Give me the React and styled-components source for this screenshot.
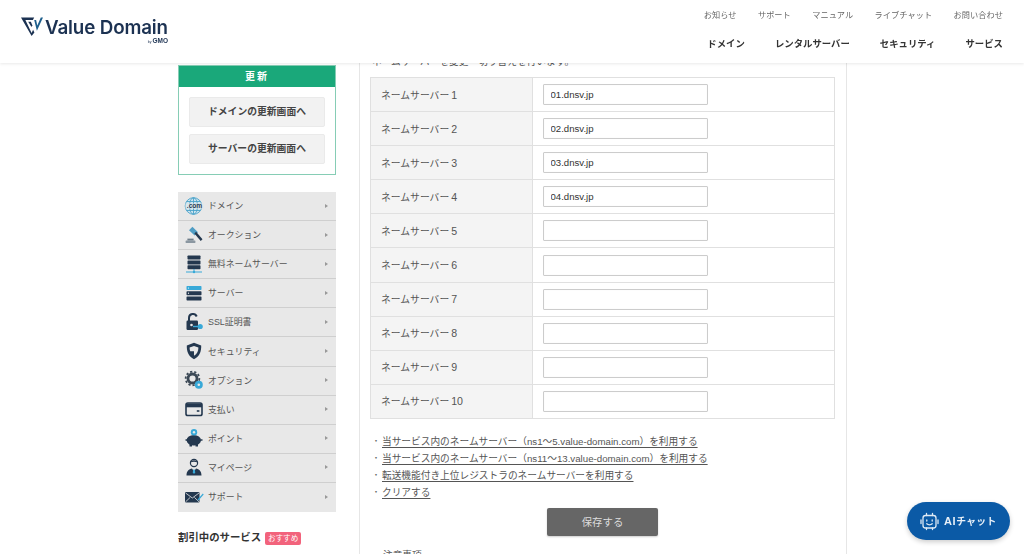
import React from "react";
import styled, { createGlobalStyle } from "styled-components";

const Global = createGlobalStyle`
  html, body { margin: 0; padding: 0; height: 554px; overflow: hidden; background: #fff; }
  body { font-family: "Liberation Sans", "Noto Sans CJK JP", sans-serif; color: #444; }
  * { box-sizing: border-box; }
`;

const Header = styled.header`
  position: fixed; top: 0; left: 0; right: 0; height: 63px; z-index: 5;
  background: #fff; box-shadow: 0 1px 3px rgba(0,0,0,.09);
  display: flex; justify-content: space-between;
  padding: 0 21px;
`;
const LogoWrap = styled.a`
  display: flex; align-items: flex-start; padding-top: 17px; gap: 2px; position: relative; width: 150px;
`;
const LogoText = styled.span`
  font-family: Inter, "Liberation Sans", sans-serif; font-weight: 600; font-size: 18.8px; line-height: 22px;
  color: #1c3252; letter-spacing: -.15px; white-space: nowrap;
`;
const ByGmo = styled.span`
  position: absolute; right: 3px; top: 37px; font-family: "Liberation Sans", sans-serif;
  font-size: 6.5px; line-height: 7px; font-weight: 700; color: #1c3252; white-space: nowrap;
  small { font-size: 3.5px; font-weight: 400; margin-right: 1px; }
`;
const NavCol = styled.nav`
  display: flex; flex-direction: column; align-items: flex-end; padding-top: 10px;
`;
const TopNav = styled.div`
  display: flex; gap: 21.4px; font-size: 8.2px; line-height: 11px; color: #666; letter-spacing: .05px; white-space: nowrap;
`;
const MainNav = styled.div`
  display: flex; gap: 30px; margin-top: 16px; font-size: 9.4px; line-height: 13px; font-weight: 700; color: #333; white-space: nowrap;
`;

const Page = styled.div`
  display: flex; width: 669px; margin-left: 178px; padding-top: 55px; gap: 23px; height: 554px; overflow: hidden;
`;
const Sidebar = styled.aside`
  width: 158px; flex: none; padding-top: 10px;
`;
const RenewBox = styled.section`
  border: 1px solid #86cdb5; height: 110px; margin-bottom: 17px;
`;
const RenewHead = styled.h3`
  margin: 0; height: 21px; background: #1aa87a; color: #fff; text-align: center;
  font-size: 10px; line-height: 22px; font-weight: 700; letter-spacing: 2px;
`;
const RenewBody = styled.div`
  padding: 10px 10px 0; display: flex; flex-direction: column; gap: 7px;
`;
const RenewButton = styled.a`
  display: block; height: 30px; background: #f2f2f2; border: 1px solid #eaeaea; border-radius: 2px;
  text-align: center; font-size: 9.8px; line-height: 28px; font-weight: 700; color: #444;
`;
const Menu = styled.ul`
  list-style: none; margin: 0; padding: 0; background: #e8e8e8;
`;
const MenuItem = styled.li`
  height: 29.1px; display: flex; align-items: center; padding: 0 8px 1px 6px;
  border-bottom: 1px solid #cfcfcf; font-size: 8.9px; color: #555;
  &:last-child { border-bottom: none; }
`;
const IconBox = styled.span`
  width: 20px; height: 20px; flex: none; margin-right: 4px; display: flex; align-items: center; justify-content: center;
`;
const MenuLabel = styled.span`flex: 1; white-space: nowrap;`;
const Arrow = styled.span`
  width: 0; height: 0; border-left: 3px solid #999; border-top: 2.5px solid transparent; border-bottom: 2.5px solid transparent;
`;
const DiscountHead = styled.div`
  display: flex; align-items: center; gap: 4px; margin-top: 19px;
  font-size: 10.4px; line-height: 14px; font-weight: 700; color: #333; white-space: nowrap;
`;
const Badge = styled.span`
  width: 36px; height: 13px; border-radius: 2px; background: #f2637c; color: #fff;
  font-size: 7.6px; line-height: 13px; font-weight: 400; text-align: center;
`;

const Main = styled.main`
  width: 488px; flex: none; border-left: 1px solid #e6e6e6; border-right: 1px solid #e6e6e6; padding: 0 10px;
`;
const Intro = styled.p`
  margin: 0 0 8px 2px; font-size: 9.7px; line-height: 14px; height: 14px; color: #555; white-space: nowrap;
`;
const Table = styled.table`
  width: 465px; border-collapse: collapse; table-layout: fixed;
`;
const Row = styled.tr`height: 34.1px;`;
const Th = styled.th`
  width: 161.5px; background: #f4f4f4; border: 1px solid #e0e0e0; padding: 0 0 0 10px; text-align: left;
  font-size: 9.8px; font-weight: 400; color: #555; white-space: nowrap;
`;
const RowNumber = styled.span`
  font-size: 10.6px; margin-left: 2px;
`;
const Td = styled.td`
  border: 1px solid #e0e0e0; padding: 0 0 0 10px; background: #fff;
`;
const Input = styled.input`
  display: block; width: 165px; height: 21px; border: 1px solid #ccc; border-radius: 1px; padding: 0 7px;
  font: 9.6px "Liberation Sans", sans-serif; color: #333; background: #fff; outline: none;
  box-shadow: inset 0 0 1px rgba(0,0,0,.1);
`;
const LinkList = styled.ul`
  list-style: none; margin: 14px 0 0; padding: 0 0 0 2px;
`;
const LinkItem = styled.li`
  height: 17px; font-size: 9.7px; line-height: 17px; color: #555; white-space: nowrap; display: flex;
  &::before { content: "・"; width: 10px; flex: none; font-size: 8px; color: #666; }
`;
const TextLink = styled.a`
  text-decoration: underline; text-underline-offset: 1.5px; color: #555;
`;
const SaveRow = styled.div`
  display: flex; justify-content: center; margin-top: 7px; padding-right: 1px;
`;
const SaveButton = styled.button`
  width: 111px; height: 28px; background: #666; border: none; border-radius: 2px; color: #ddd;
  font: 10.4px "Liberation Sans", "Noto Sans CJK JP", sans-serif; box-shadow: 0 1px 2px rgba(0,0,0,.2);
`;
const NoteHead = styled.p`
  margin: 13px 0 0 13px; font-size: 9.7px; line-height: 14px; color: #555;
`;
const ChatButton = styled.button`
  position: fixed; left: 907px; top: 502px; width: 103px; height: 38px; border: none; border-radius: 19px;
  background: #0b5aa6; color: #e8f0f8; display: flex; align-items: center; gap: 5px; padding: 0 0 0 13px;
  font: 700 9.8px "Liberation Sans", "Noto Sans CJK JP", sans-serif; letter-spacing: .3px;
  box-shadow: 0 2px 5px rgba(0,0,0,.2); white-space: nowrap;
`;
const ChatLatin = styled.span`
  font-size: 11px; letter-spacing: .6px;
`;

const navy = "#24384f", sky = "#38a9d8";
const S = ({ children, size = 20 }) => <svg width={size} height={size} viewBox="0 0 20 20">{children}</svg>;

const icons = {
  domain: <S>
    <circle cx="9.5" cy="10" r="8.6" fill="#cfe4ee" />
    <g fill="none" stroke="#4ba3c9" strokeWidth=".9">
      <circle cx="9.5" cy="10" r="8.3" /><ellipse cx="9.5" cy="10" rx="4" ry="8.3" /><path d="M2.5 5.5h14M2.5 14.5h14M9.5 2v16" />
    </g>
    <rect x="1.5" y="7.4" width="18" height="5.2" fill="#dbe7ec" opacity=".9" />
    <text x="10.5" y="12.2" textAnchor="middle" fontSize="6.6" fontWeight="700" fill={navy} fontFamily="Liberation Sans">.com</text>
  </S>,
  auction: <S>
    <path d="M8.4 1.8l5.6 5.4-3.4 3.4-5.6-5.4z" fill="#4f9dc4" />
    <path d="M10.4 8.4l1.7-1.7 6.4 7.6-1.8 1.6z" fill={navy} />
    <path d="M3.4 13.6h6.2v2H3.4z" fill="#6f7e8a" /><rect x="1.6" y="15.6" width="9.8" height="2.4" rx=".4" fill="#8b97a1" />
  </S>,
  ns: <S>
    <g fill={navy}>
      <rect x="3.5" y="1.5" width="13" height="4" rx=".7" /><rect x="3.5" y="6.4" width="13" height="4" rx=".7" /><rect x="3.5" y="11.3" width="13" height="4" rx=".7" />
    </g>
    <path d="M10 15v2.5M2 18h16" stroke={sky} strokeWidth="1" /><circle cx="10" cy="18" r="1.2" fill={sky} />
  </S>,
  server: <S>
    <rect x="2.5" y="3" width="15" height="4" rx=".7" fill={sky} /><rect x="2.5" y="8.2" width="15" height="4" rx=".7" fill={navy} /><rect x="2.5" y="13.4" width="15" height="4" rx=".7" fill={navy} />
    <circle cx="4.5" cy="5" r=".6" fill="#fff" /><circle cx="4.5" cy="10.2" r=".6" fill="#fff" />
  </S>,
  ssl: <S>
    <path d="M5 9V6a4 4 0 0 1 7.7-1.5" fill="none" stroke={navy} strokeWidth="2" />
    <rect x="2.5" y="8.5" width="11.5" height="9.5" rx="1.2" fill={navy} />
    <circle cx="7.5" cy="13" r="1.3" fill="#e8e8e8" />
    <circle cx="16.2" cy="14.5" r="2.6" fill={sky} /><path d="M9 14.5h6" stroke={sky} strokeWidth="1.4" />
  </S>,
  security: <S>
    <path d="M10 1.8l7.2 2.6c.2 6.2-1.6 10.8-7.2 13.8C4.4 15.2 2.6 10.6 2.8 4.4z" fill={navy} />
    <path d="M10 5l4.4 1.6c0 3.6-1.2 6.4-4.4 8.2z" fill="#e8e8e8" /><path d="M10 5L5.6 6.6c0 1.4.2 2.6.6 3.7H10z" fill="#e8e8e8" />
  </S>,
  option: <S>
    <circle cx="8.5" cy="8.5" r="4.5" fill="none" stroke="#3b4855" strokeWidth="2.8" />
    <circle cx="8.5" cy="8.5" r="6.8" fill="none" stroke="#3b4855" strokeWidth="1.8" strokeDasharray="2.2 2" />
    <circle cx="14.8" cy="14.8" r="4" fill={sky} /><circle cx="14.8" cy="14.8" r="1.3" fill="#e8e8e8" />
  </S>,
  pay: <S>
    <rect x="2" y="4" width="16" height="12.5" rx="1.8" fill="none" stroke={navy} strokeWidth="1.6" />
    <rect x="2" y="4.5" width="16" height="3.8" fill={navy} />
    <rect x="12.8" y="11.2" width="2.6" height="1.6" fill={navy} />
  </S>,
  point: <S>
    <ellipse cx="9.8" cy="12.2" rx="7.2" ry="5.2" fill={navy} />
    <rect x="5.5" y="15.5" width="2.5" height="3" fill={navy} /><rect x="11.5" y="15.5" width="2.5" height="3" fill={navy} />
    <path d="M1.5 12h2M16.5 12h2" stroke={navy} strokeWidth="1.6" />
    <circle cx="10" cy="4.3" r="3.2" fill={sky} /><circle cx="10" cy="4.3" r="1.2" fill="#e8e8e8" />
  </S>,
  my: <S>
    <circle cx="10" cy="6" r="3.6" fill="#e8e8e8" stroke={navy} strokeWidth="1.2" />
    <path d="M6.4 5.5C7 2.6 13 2.6 13.6 5.5 11.5 4.6 8.5 4.6 6.4 5.5z" fill={navy} />
    <path d="M2.5 18.5c0-4.5 2.5-6.6 5.5-7l2 3 2-3c3 .4 5.5 2.5 5.5 7z" fill={navy} />
    <path d="M9.2 12.5h1.6l.4 3-1.2 1.4-1.2-1.4z" fill={sky} />
  </S>,
  support: <S>
    <rect x="1" y="5" width="14.5" height="10.5" rx="1" fill={navy} />
    <path d="M1.6 6l6.7 5 6.7-5M1.6 14.8l4.6-4.4M15 14.8l-4.6-4.4" fill="none" stroke="#e8e8e8" strokeWidth=".8" />
    <path d="M14 12l4.8-5.4.9.8-4.8 5.5-1.5.6z" fill={sky} />
  </S>,
};

const menu = [
  ["domain", "ドメイン"], ["auction", "オークション"], ["ns", "無料ネームサーバー"], ["server", "サーバー"],
  ["ssl", "SSL証明書"], ["security", "セキュリティ"], ["option", "オプション"], ["pay", "支払い"],
  ["point", "ポイント"], ["my", "マイページ"], ["support", "サポート"],
];
const servers = ["01.dnsv.jp", "02.dnsv.jp", "03.dnsv.jp", "04.dnsv.jp", "", "", "", "", "", ""];

const LogoMark = () => (
  <svg width="22" height="19" viewBox="0 0 22 19" style={{ flex: "none" }}>
    <path d="M0 .5h13.2L11.9 3H4.4L10.6 16l1.5-3.2 1.3 2.6L10.6 19z" fill="#1c3252" />
    <path d="M7.2 4.8h2.7l1.4 3.4-.8 1.8z" fill="#1c3252" />
    <path d="M13.2 3h1.9l1.2 5.4L19.8.5H22l-6.1 13.2z" fill="#1d5f8c" />
  </svg>
);
const BotIcon = () => (
  <svg width="19" height="19" viewBox="0 0 19 19" fill="none" stroke="#dfeaf5" strokeWidth="1.3" strokeLinecap="round" strokeLinejoin="round">
    <rect x="3" y="3.5" width="13" height="12.5" rx="2.5" />
    <path d="M6.5 1.5v2M12.5 1.5v2M6.5 16v1.5M12.5 16v1.5M1 8v3.5M18 8v3.5" />
    <path d="M6.8 8v1M12.2 8v1M6.8 11.8c1.4 1.3 4 1.3 5.4 0" />
  </svg>
);

export default function App() {
  return (
    <>
      <Global />
      <Header>
        <LogoWrap>
          <LogoMark />
          <LogoText>Value Domain</LogoText>
          <ByGmo><small>by</small>GMO</ByGmo>
        </LogoWrap>
        <NavCol>
          <TopNav>
            <span>お知らせ</span><span>サポート</span><span>マニュアル</span><span>ライブチャット</span><span>お問い合わせ</span>
          </TopNav>
          <MainNav>
            <span>ドメイン</span><span>レンタルサーバー</span><span>セキュリティ</span><span>サービス</span>
          </MainNav>
        </NavCol>
      </Header>
      <Page>
        <Sidebar>
          <RenewBox>
            <RenewHead>更新</RenewHead>
            <RenewBody>
              <RenewButton>ドメインの更新画面へ</RenewButton>
              <RenewButton>サーバーの更新画面へ</RenewButton>
            </RenewBody>
          </RenewBox>
          <Menu>
            {menu.map(([k, label]) => (
              <MenuItem key={k}>
                <IconBox>{icons[k]}</IconBox>
                <MenuLabel>{label}</MenuLabel>
                <Arrow />
              </MenuItem>
            ))}
          </Menu>
          <DiscountHead>割引中のサービス<Badge>おすすめ</Badge></DiscountHead>
        </Sidebar>
        <Main>
          <Intro>ネームサーバーを変更・切り替えを行います。</Intro>
          <Table>
            <tbody>
              {servers.map((v, i) => (
                <Row key={i}>
                  <Th>ネームサーバー<RowNumber>{i + 1}</RowNumber></Th>
                  <Td><Input defaultValue={v} /></Td>
                </Row>
              ))}
            </tbody>
          </Table>
          <LinkList>
            <LinkItem><TextLink>当サービス内のネームサーバー（ns1〜5.value-domain.com）を利用する</TextLink></LinkItem>
            <LinkItem><TextLink>当サービス内のネームサーバー（ns11〜13.value-domain.com）を利用する</TextLink></LinkItem>
            <LinkItem><TextLink>転送機能付き上位レジストラのネームサーバーを利用する</TextLink></LinkItem>
            <LinkItem><TextLink>クリアする</TextLink></LinkItem>
          </LinkList>
          <SaveRow><SaveButton>保存する</SaveButton></SaveRow>
          <NoteHead>注意事項</NoteHead>
        </Main>
      </Page>
      <ChatButton><BotIcon /><span><ChatLatin>AI</ChatLatin>チャット</span></ChatButton>
    </>
  );
}
